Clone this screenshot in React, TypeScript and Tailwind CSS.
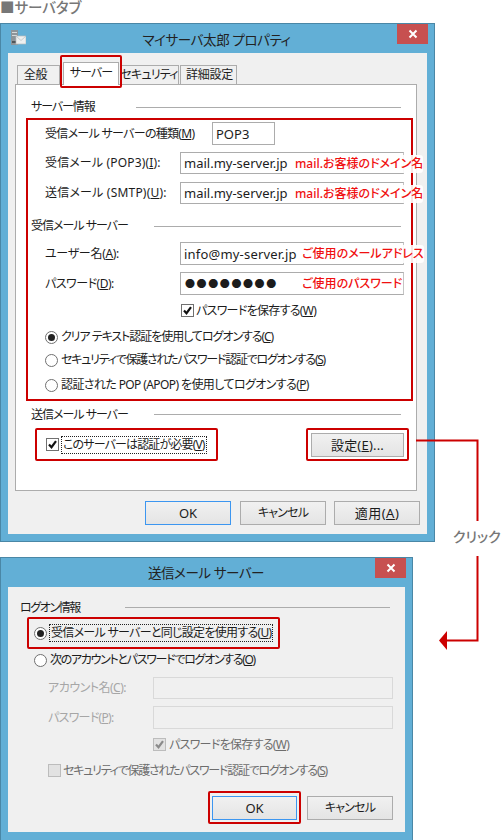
import React from "react";

function Close() {
  return (
    <div className="absolute top-0 flex h-[20px] w-[31px] items-center justify-center bg-[#c75050] right-[6px]">
      <svg width="10" height="10" viewBox="0 0 10 10">
        <path d="M1.5 1.5 8.5 8.5M8.5 1.5 1.5 8.5" stroke="#fff" strokeWidth="2" />
      </svg>
    </div>
  );
}

function MailServerIcon() {
  return (
    <svg width="16" height="16" viewBox="0 0 16 16" className="absolute left-[9px] top-[6px]">
      <rect x="1" y="0" width="7" height="15" fill="#8d9499" />
      <rect x="2" y="2" width="5" height="1" fill="#d5d9db" />
      <rect x="2" y="5" width="5" height="1" fill="#d5d9db" />
      <rect x="2" y="11" width="5" height="2" fill="#50565a" />
      <rect x="6" y="6" width="10" height="8" fill="#eef0f0" stroke="#b8bcbe" strokeWidth="0.7" />
      <path d="M6 6 11 10.5 16 6" fill="none" stroke="#b8bcbe" strokeWidth="0.7" />
    </svg>
  );
}

function Check({ color = "#111" }: { color?: string }) {
  return (
    <svg width="11" height="11" viewBox="0 0 11 11">
      <path d="M2 5.5 4.5 8.2 9 2.2" fill="none" stroke={color} strokeWidth="2.2" />
    </svg>
  );
}

function CheckBox({ disabled, checked = true }: { disabled?: boolean; checked?: boolean }) {
  return (
    <div
      className={
        disabled
          ? "flex h-[13px] w-[13px] shrink-0 items-center justify-center border border-[#bcbcbc] bg-[#e2e2e2]"
          : "flex h-[13px] w-[13px] shrink-0 items-center justify-center border border-[#707070] bg-white"
      }
    >
      {checked && <Check color={disabled ? "#8a8a8a" : "#111"} />}
    </div>
  );
}

function Radio({ on }: { on?: boolean }) {
  return (
    <div className="flex h-[13px] w-[13px] shrink-0 items-center justify-center rounded-full border border-[#707070] bg-white">
      {on && <div className="h-[7px] w-[7px] rounded-full bg-[#222]" />}
    </div>
  );
}

function Button({ children, primary, className }: { children: React.ReactNode; primary?: boolean; className: string }) {
  return (
    <div
      className={
        (primary ? "border-[#3c96f0] " : "border-[#acacac] ") +
        "flex h-[24px] items-center justify-center whitespace-nowrap border bg-linear-to-b from-[#f1f1f1] to-[#e4e4e4] " +
        className
      }
    >
      {children}
    </div>
  );
}

function RadioRow({ children, className, textClass }: { children: React.ReactNode; className: string; textClass: string }) {
  return (
    <div className={"flex h-[16px] items-center pl-[17px] " + className}>
      <Radio />
      <span className={"ml-[3px] whitespace-nowrap " + textClass}>{children}</span>
    </div>
  );
}

function Note({ children, className }: { children: React.ReactNode; className: string }) {
  return (
    <span className={"absolute top-[2px] h-[18px] whitespace-nowrap rounded-[3px] bg-white/90 text-[12px] font-medium leading-[18px] tracking-normal text-[#f01010] " + className}>
      {children}
    </span>
  );
}

function Field({ label, value, note, noteClass, h, mt, labelClass }: { label: React.ReactNode; value: React.ReactNode; note: string; noteClass: string; h: string; mt: string; labelClass: string }) {
  return (
    <div className={"flex items-center pl-[17px] " + mt}>
      <span className={"w-[135px] whitespace-nowrap " + labelClass}>{label}</span>
      <div className={"relative flex w-[224px] items-center border border-[#acacac] border-r-[#c4c4c4] bg-white pl-[3px] text-[13px] tracking-normal " + h}>
        {value}
        <Note className={noteClass}>{note}</Note>
      </div>
    </div>
  );
}

export default function App() {
  return (
    <div className="relative h-[840px] w-[502px] overflow-hidden bg-white text-[12px] leading-[16px] tracking-[-0.3px] text-[#1c1c1c] [font-family:'Noto_Sans','Noto_Sans_CJK_JP',sans-serif] [font-feature-settings:'palt']">
      <div className="h-[23px] text-[14.5px] font-medium leading-[15px] tracking-normal text-[#777]">■サーバタブ</div>

      {/* properties window */}
      <div className="relative h-[519px] w-[435px] border border-[#4a87a6] bg-[#62afd6] px-[7px]">
        <MailServerIcon />
        <Close />
        <div className="flex h-[29px] items-center justify-center pr-[2px] pt-[2px] text-[13.5px] tracking-[-0.4px] text-[#222]">マイサーバ太郎 プロパティ</div>
        <div className="relative h-[481px] w-[419px] bg-[#f0f0f0]">
          <div className="flex h-[31px] items-end">
            <div className="ml-[9px] flex h-[19px] w-[43px] items-center justify-center border border-b-0 border-[#acacac] pr-[6px]">全般</div>
            <div className="relative z-10 -mb-px ml-[3px] flex h-[23px] w-[56px] items-center justify-center whitespace-nowrap border border-b-0 border-[#acacac] bg-white pb-[3px] tracking-[-0.9px]">サーバー</div>
            <div className="ml-px flex h-[19px] w-[59px] items-center justify-center whitespace-nowrap border border-b-0 border-l-0 border-[#acacac] tracking-[-0.8px]">セキュリティ</div>
            <div className="ml-px flex h-[19px] w-[57px] items-center justify-center whitespace-nowrap border border-b-0 border-[#acacac] pl-[2px] tracking-[-0.2px]">詳細設定</div>
          </div>
          <div className="absolute left-[52px] top-[2px] z-20 h-[33px] w-[62px] rounded-[2px] border-2 border-[#cc0000]" />

          <div className="ml-[7px] h-[407px] w-[402px] border border-[#acacac] bg-white pl-[10px] pt-[14px]">
            <div className="ml-[5px] flex h-[16px] items-center">
              <span className="w-[105px] whitespace-nowrap tracking-[-1.1px]">サーバー情報</span>
              <div className="h-px w-[265px] bg-[#acacac]" />
            </div>

            <div className="mt-[3px] h-[283px] w-[387px] border-2 border-[#cc0000] pt-[2px]">
              <div className="flex items-center pl-[17px]">
                <span className="w-[167px] whitespace-nowrap tracking-[-0.7px]">受信メール サーバーの種類(<u>M</u>)</span>
                <div className="flex h-[23px] w-[63px] items-center border border-[#acacac] pl-[3px] text-[13px] tracking-normal">POP3</div>
              </div>
              <Field
                mt="mt-[7px]"
                h="h-[22px]"
                labelClass="tracking-[0.15px]"
                label={<>受信メール (POP3)(<u>I</u>):</>}
                value="mail.my-server.jp"
                note="mail.お客様のドメイン名"
                noteClass="left-[114px]"
              />
              <Field
                mt="mt-[8px]"
                h="h-[22px]"
                labelClass="tracking-[0.2px]"
                label={<>送信メール (SMTP)(<u>U</u>):</>}
                value="mail.my-server.jp"
                note="mail.お客様のドメイン名"
                noteClass="left-[114px]"
              />
              <div className="ml-[3px] mt-[14px] flex h-[16px] items-center">
                <span className="w-[123px] whitespace-nowrap tracking-[-1px]">受信メール サーバー</span>
                <div className="h-px w-[247px] bg-[#acacac]" />
              </div>
              <Field
                mt="mt-[8px]"
                h="h-[23px]"
                labelClass=""
                label={<>ユーザー名(<u>A</u>):</>}
                value={<span className="tracking-[0.2px]">info@my-server.jp</span>}
                note="ご使用のメールアドレス"
                noteClass="left-[121px]"
              />
              <Field
                mt="mt-[7px]"
                h="h-[23px]"
                labelClass="tracking-[-0.5px]"
                label={<>パスワード(<u>D</u>):</>}
                value={<span className="ml-px text-[10px] tracking-[1.6px] [font-feature-settings:normal]">●●●●●●●●</span>}
                note="ご使用のパスワード"
                noteClass="left-[121px]"
              />
              <div className="ml-[153px] mt-[9px] flex h-[13px] items-center">
                <CheckBox />
                <span className="ml-[2px] whitespace-nowrap tracking-[-0.7px]">パスワードを保存する(<u>W</u>)</span>
              </div>
              <div className="mt-[12px] flex h-[16px] items-center pl-[17px]">
                <Radio on />
                <span className="ml-[3px] whitespace-nowrap tracking-[-1.05px]">クリア テキスト認証を使用してログオンする(<u>C</u>)</span>
              </div>
              <RadioRow className="mt-[7px]" textClass="tracking-[-1.25px]">セキュリティで保護されたパスワード認証でログオンする(<u>S</u>)</RadioRow>
              <RadioRow className="mt-[9px]" textClass="tracking-[-0.6px]">認証された POP (APOP) を使用してログオンする(<u>P</u>)</RadioRow>
            </div>

            <div className="ml-[5px] mt-[6px] flex h-[16px] items-center">
              <span className="w-[123px] whitespace-nowrap tracking-[-1px]">送信メール サーバー</span>
              <div className="-mt-[2px] h-px w-[247px] bg-[#acacac]" />
            </div>

            <div className="ml-[9px] mt-[5px] flex">
              <div className="flex h-[33px] w-[183px] items-center rounded-[2px] border-2 border-[#cc0000] pl-[9px]">
                <CheckBox />
                <span className="ml-[2px] whitespace-nowrap border border-dotted border-[#222] px-px tracking-[-0.85px]">このサーバーは認証が必要(<u>V</u>)</span>
              </div>
              <div className="ml-[88px] flex h-[33px] w-[103px] items-center justify-center rounded-[2px] border-2 border-[#cc0000]">
                <Button className="w-[93px] text-[13px] tracking-[0.2px]">設定(<u>E</u>)...</Button>
              </div>
            </div>
          </div>

          <div className="ml-[137px] mt-[10px] flex">
            <Button primary className="w-[86px] text-[13px] tracking-normal">OK</Button>
            <Button className="ml-[9px] w-[86px] tracking-[-0.8px]">キャンセル</Button>
            <Button className="ml-[8px] w-[86px] text-[13px] tracking-[0.5px]">適用(<u>A</u>)</Button>
          </div>
        </div>
      </div>

      {/* outgoing mail server window */}
      <div className="relative mt-[15px] h-[283px] w-[413px] border border-b-0 border-[#4a87a6] bg-[#62afd6] px-[7px]">
        <Close />
        <div className="flex h-[29px] items-center justify-center pr-[1px] text-[13.5px] tracking-[-0.4px] text-[#222]">送信メール サーバー</div>
        <div className="h-[245px] w-[397px] bg-[#f0f0f0] pt-[13px]">
          <div className="ml-[12px] flex h-[16px] items-center">
            <span className="w-[105px] whitespace-nowrap tracking-[-1.4px]">ログオン情報</span>
            <div className="-mt-[2px] h-px w-[265px] bg-[#acacac]" />
          </div>
          <div className="ml-[19px] mt-px flex h-[32px] w-[253px] items-center rounded-[2px] border-2 border-[#cc0000] pl-[5px]">
            <Radio on />
            <span className="ml-[2px] whitespace-nowrap border border-dotted border-[#222] px-px tracking-[-0.7px]">受信メール サーバーと同じ設定を使用する(<u>U</u>)</span>
          </div>
          <div className="ml-[26px] mt-[3px] flex h-[16px] items-center">
            <Radio />
            <span className="ml-[3px] whitespace-nowrap tracking-[-1.3px]">次のアカウントとパスワードでログオンする(<u>O</u>)</span>
          </div>
          <div className="ml-[40px] mt-[9px] flex items-center text-[#a6a6a6]">
            <span className="w-[105px] whitespace-nowrap tracking-[-0.5px]">アカウント名(<u>C</u>):</span>
            <div className="h-[22px] w-[240px] border border-[#d9d9d9]" />
          </div>
          <div className="ml-[40px] mt-[7px] flex items-center text-[#a6a6a6]">
            <span className="w-[105px] whitespace-nowrap tracking-[-0.7px]">パスワード(<u>P</u>):</span>
            <div className="h-[23px] w-[240px] border border-[#d9d9d9]" />
          </div>
          <div className="ml-[145px] mt-[9px] flex h-[13px] items-center text-[#6d6d6d]">
            <CheckBox disabled />
            <span className="ml-[3px] whitespace-nowrap tracking-[-0.7px]">パスワードを保存する(<u>W</u>)</span>
          </div>
          <div className="ml-[40px] mt-[13px] flex h-[13px] items-center text-[#6d6d6d]">
            <CheckBox disabled checked={false} />
            <span className="ml-[2px] whitespace-nowrap tracking-[-1.25px]">セキュリティで保護されたパスワード認証でログオンする(<u>S</u>)</span>
          </div>
          <div className="ml-[200px] mt-[14px] flex items-center">
            <div className="flex h-[33px] w-[93px] items-center justify-center rounded-[2px] border-2 border-[#cc0000]">
              <Button primary className="w-[85px] text-[13px] tracking-normal">OK</Button>
            </div>
            <Button className="ml-[6px] w-[86px] tracking-[-0.8px]">キャンセル</Button>
          </div>
        </div>
      </div>

      {/* click connector */}
      <svg width="86" height="220" viewBox="0 0 86 220" className="absolute left-[416px] top-[435px]">
        <path d="M0 5.5H61.5V86M61.5 121V205.5H30" fill="none" stroke="#cc0000" strokeWidth="2" />
        <path d="M23 205.5 31 196V215Z" fill="#cc0000" />
      </svg>
      <span className="absolute left-[453px] top-[529px] text-[14px] font-medium tracking-normal text-[#777]">クリック</span>
    </div>
  );
}
